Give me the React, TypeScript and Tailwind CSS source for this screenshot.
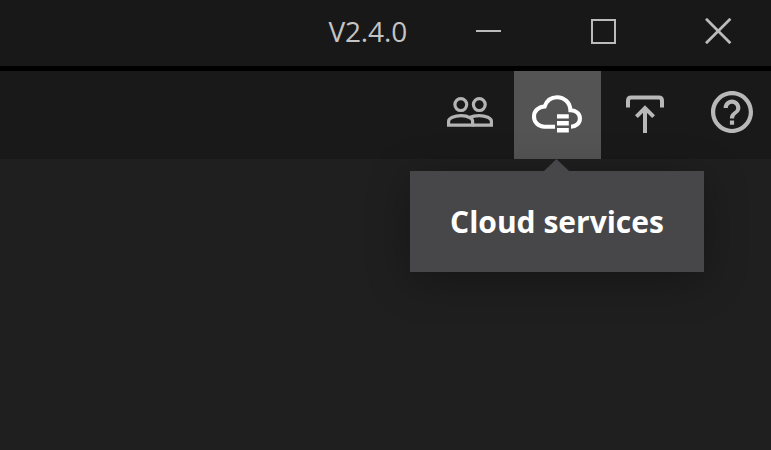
import type { ReactNode } from 'react';

function WindowControls() {
  return (
    <div className="flex h-full w-[345px] shrink-0">
      <button className="flex h-[62px] w-[115px] items-center justify-center" aria-label="Minimize">
        <span className="h-0.5 w-[25px] bg-[#bbbbbb]" />
      </button>
      <button className="flex h-[63px] w-[115px] items-center justify-center" aria-label="Maximize">
        <span className="size-[25px] border-2 border-[#bbbbbb]" />
      </button>
      <button className="flex h-[62px] w-[115px] items-center justify-center" aria-label="Close">
        <svg width="27" height="26" viewBox="0 0 27 26" stroke="#bbbbbb" strokeWidth="2.8" fill="none">
          <path d="M1 .8 25.4 25.2M25.4.8 1 25.2" />
        </svg>
      </button>
    </div>
  );
}

function PeopleIcon() {
  return (
    <svg width="87" height="88" viewBox="427 71 87 88" fill="none" stroke="#b4b4b4" strokeWidth="3.2">
      <circle cx="460.8" cy="104.6" r="5.9" />
      <circle cx="479.3" cy="104.6" r="5.9" />
      <path d="M448.6 125.2V121.2C448.6 118.3 454.5 115.6 461 115.6C465 115.6 468.2 116.6 470.2 117.8C472 118.8 472.6 119.8 472.6 121.2V125.2Z" />
      <path d="M469.5 117.5C472 116.3 475.5 115.6 479.3 115.6C485.8 115.6 491.4 118.3 491.4 121.2V125.2H472.6" />
    </svg>
  );
}

function CloudIcon() {
  return (
    <svg width="87" height="88" viewBox="514 71 87 88" fill="none">
      <path
        d="M555 126.7H544.5C538.5 126.7 534 122.3 534 116.7C534 111 538.4 106.8 544.6 106.5C546.5 101 551 97.2 557 97.2C564.3 97.2 570 102.6 570.4 110.2C575.8 110 579.9 113.6 579.9 118.4C579.9 123.1 576.2 126.7 571 126.7"
        stroke="#fff"
        strokeWidth="4.1"
      />
      <path d="M557 114.2h11.8v4.4H557zM557 121h11.8v4.4H557zM557 128h11.8v4.6H557z" fill="#fff" />
    </svg>
  );
}

function UploadIcon() {
  return (
    <svg width="87" height="88" viewBox="601 71 87 88" fill="none" stroke="#b8b8b8" strokeWidth="4">
      <path d="M628 107.6V100.7Q628 97.4 631.3 97.4H658.7Q662 97.4 662 100.7V107.6" />
      <path d="M645 133V108M636.4 116.6 645 108 653.6 116.6" />
    </svg>
  );
}

function HelpIcon() {
  return (
    <svg width="87" height="88" viewBox="688 71 87 88" fill="#b8b8b8">
      <path
        transform="translate(706.8 86.9) scale(2.1)"
        d="M11 18h2v-2h-2v2zm1-16C6.48 2 2 6.48 2 12s4.48 10 10 10 10-4.48 10-10S17.52 2 12 2zm0 18c-4.41 0-8-3.59-8-8s3.59-8 8-8 8 3.59 8 8-3.59 8-8 8zm0-14c-2.21 0-4 1.79-4 4h2c0-1.1.9-2 2-2s2 .9 2 2c0 2-3 1.75-3 5h2c0-2.25 3-2.5 3-5 0-2.21-1.79-4-4-4z"
      />
    </svg>
  );
}

function ToolButton({ label, active, children }: { label: string; active?: boolean; children: ReactNode }) {
  return (
    <button aria-label={label} className={`h-[88px] w-[87px] shrink-0 ${active ? 'bg-[#545454]' : ''}`}>
      {children}
    </button>
  );
}

function Tooltip({ text }: { text: string }) {
  return (
    <div className="absolute top-[100px] left-1/2 ml-[-147.5px] flex h-[101px] w-[294px] items-center justify-center bg-[#474749] shadow-[0_8px_44px_rgba(0,0,0,0.32)]">
      <svg className="absolute -top-3 left-[134px]" width="25" height="12" viewBox="0 0 25 12" fill="#474749">
        <path d="M0 12 12.5 0 25 12z" />
      </svg>
      <span className="text-[30px] leading-none font-bold whitespace-nowrap text-white">{text}</span>
    </div>
  );
}

export default function App() {
  return (
    <div className="flex h-[450px] w-[771px] flex-col overflow-hidden bg-[#1f1f1f] font-['Open_Sans','Noto_Sans',sans-serif]">
      <header className="flex h-[71px] shrink-0 border-b-[5px] border-black bg-[#181818]">
        <div className="flex h-[61px] w-[431px] shrink-0 items-center justify-end pr-6">
          <span className="text-[28px] leading-none tracking-[-0.15px] text-[#c4c4c4]">V2.4.0</span>
        </div>
        <WindowControls />
      </header>
      <nav className="flex h-[88px] shrink-0 bg-[#191919] pl-[427px]">
        <ToolButton label="Users">
          <PeopleIcon />
        </ToolButton>
        <div className="relative shrink-0">
          <ToolButton label="Cloud services" active>
            <CloudIcon />
          </ToolButton>
          <Tooltip text="Cloud services" />
        </div>
        <ToolButton label="Upload">
          <UploadIcon />
        </ToolButton>
        <ToolButton label="Help">
          <HelpIcon />
        </ToolButton>
      </nav>
      <main className="flex-1" />
    </div>
  );
}
